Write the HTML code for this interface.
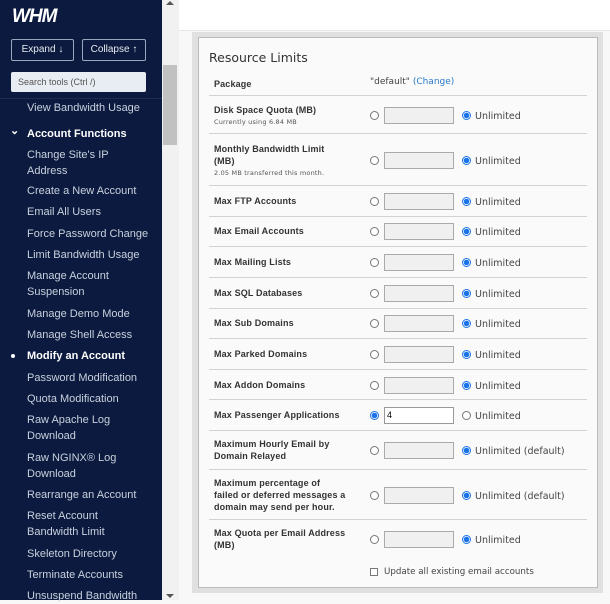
<!DOCTYPE html>
<html><head><meta charset="utf-8"><style>
*{margin:0;padding:0;box-sizing:border-box}
body{width:610px;height:600px;overflow:hidden;background:#f8f8f8;font-family:"Liberation Sans",sans-serif;position:relative}
#sb{position:absolute;left:0;top:0;width:162px;height:600px;background:#0b1a3e;color:#c9d1de;font-size:11px}
#sb .i{position:absolute;left:27px;line-height:16px}
#scroll{position:absolute;left:162px;top:0;width:17px;height:600px;background:#f1f1f1}
#thumb{position:absolute;left:163px;top:65px;width:14px;height:80px;background:#c1c1c1}
#top{position:absolute;left:179px;top:0;width:431px;height:31px;background:#fff;border-bottom:1px solid #e6e6e6}
#band{position:absolute;left:192px;top:32px;width:411px;height:561px;background:#e0e0e0}
#panel{position:absolute;left:198px;top:37px;width:400px;height:551px;background:#fafafa;border:1px solid #bbb}
.m{position:absolute;font-family:"DejaVu Sans","Liberation Sans",sans-serif}
.lbl{position:absolute;left:214px;font-size:9px;font-weight:bold;color:#333;line-height:12px;letter-spacing:.15px}
.sub{position:absolute;left:214px;font-size:6.5px;color:#555;font-family:"DejaVu Sans",sans-serif;letter-spacing:.2px}
.hr{position:absolute;left:209px;width:378px;height:1px;background:#d2d2d2}
.r{position:absolute;width:9px;height:9px;border-radius:50%;border:1px solid #777;background:#fff}
.r.on{border:1px solid #1a73e8;background:radial-gradient(circle,#1a73e8 0 2.5px,#fff 3px)}
.in{position:absolute;left:384px;width:70px;height:17px;border:1px solid #aaa;background:#f0f0f0}
.t{position:absolute;font-size:9.5px;color:#444;font-family:"DejaVu Sans",sans-serif;margin-top:2px}
</style></head><body>
<div id="sb">
<div style="position:absolute;left:12px;top:6px;font-size:19px;font-weight:900;font-style:italic;color:#fff;letter-spacing:-1px">WHM</div>
<div style="position:absolute;left:11px;top:39px;width:63px;height:22px;border:1px solid #9aa6bb;border-radius:2px;color:#e6eaf0;font-size:10px;line-height:20px;text-align:center">Expand ↓</div>
<div style="position:absolute;left:82px;top:39px;width:64px;height:22px;border:1px solid #9aa6bb;border-radius:2px;color:#e6eaf0;font-size:10px;line-height:20px;text-align:center">Collapse ↑</div>
<div style="position:absolute;left:11px;top:72px;width:135px;height:20px;background:#e8ecf3;border-radius:2px;color:#555;font-size:9px;line-height:20px;padding-left:7px">Search tools (Ctrl /)</div>
<div style="position:absolute;left:0;top:98px;width:162px;height:1px;background:#1d2c50"></div>
<div class="i" style="top:100px">View Bandwidth Usage</div>
<div class="i" style="top:126px;color:#fff;font-weight:bold">Account Functions</div>
<div style="position:absolute;left:10px;top:124px;color:#fff;font-size:11px;font-weight:bold">⌄</div>
<div class="i" style="top:147px">Change Site's IP<br>Address</div>
<div class="i" style="top:183px">Create a New Account</div>
<div class="i" style="top:204px">Email All Users</div>
<div class="i" style="top:226px">Force Password Change</div>
<div class="i" style="top:247px">Limit Bandwidth Usage</div>
<div class="i" style="top:268px">Manage Account<br>Suspension</div>
<div class="i" style="top:306px">Manage Demo Mode</div>
<div class="i" style="top:327px">Manage Shell Access</div>
<div style="position:absolute;left:11px;top:354px;width:4px;height:4px;border-radius:50%;background:#fff"></div>
<div class="i" style="top:348px;color:#fff;font-weight:bold">Modify an Account</div>
<div class="i" style="top:370px">Password Modification</div>
<div class="i" style="top:391px">Quota Modification</div>
<div class="i" style="top:412px">Raw Apache Log<br>Download</div>
<div class="i" style="top:450px">Raw NGINX® Log<br>Download</div>
<div class="i" style="top:487px">Rearrange an Account</div>
<div class="i" style="top:508px">Reset Account<br>Bandwidth Limit</div>
<div class="i" style="top:546px">Skeleton Directory</div>
<div class="i" style="top:567px">Terminate Accounts</div>
<div class="i" style="top:588px">Unsuspend Bandwidth</div>
</div>
<div id="scroll"></div><div id="thumb"></div>
<div style="position:absolute;left:166px;top:1px;width:0;height:0;border-left:4px solid transparent;border-right:4px solid transparent;border-bottom:4px solid #555"></div>
<div style="position:absolute;left:166px;top:594px;width:0;height:0;border-left:4px solid transparent;border-right:4px solid transparent;border-top:4px solid #555"></div>
<div id="top"></div>
<div id="band"></div>
<div id="panel"></div>
<div class="m" style="left:209px;top:50px;font-size:12.5px;color:#333">Resource Limits</div>
<div class="lbl" style="top:78px">Package</div>
<div class="t" style="left:370px;top:77px;font-size:9px;margin-top:0">"default" <span style="color:#2a7ac9">(Change)</span></div>
<div class="hr" style="top:95px"></div>

<div class="lbl" style="top:104px">Disk Space Quota (MB)</div><div class="sub" style="top:118px">Currently using 6.84 MB</div>
<div class="r" style="left:370px;top:111px"></div><div class="in" style="top:107px"></div><div class="r on" style="left:462px;top:111px"></div><div class="t" style="left:475px;top:109px">Unlimited</div>
<div class="hr" style="top:133px"></div>

<div class="lbl" style="top:143px">Monthly Bandwidth Limit<br>(MB)</div><div class="sub" style="top:169px">2.05 MB transferred this month.</div>
<div class="r" style="left:370px;top:156px"></div><div class="in" style="top:152px"></div><div class="r on" style="left:462px;top:156px"></div><div class="t" style="left:475px;top:154px">Unlimited</div>
<div class="hr" style="top:185px"></div>

<div id="rows"></div>
<script>
var rows=[["Max FTP Accounts",201,216],["Max Email Accounts",231,246],["Max Mailing Lists",262,277],["Max SQL Databases",293,308],["Max Sub Domains",323,338],["Max Parked Domains",354,369],["Max Addon Domains",385,399]];
var h="";
rows.forEach(function(r){var c=r[1];
h+='<div class="lbl" style="top:'+(c-6)+'px">'+r[0]+'</div><div class="r" style="left:370px;top:'+(c-4)+'px"></div><div class="in" style="top:'+(c-8)+'px"></div><div class="r on" style="left:462px;top:'+(c-4)+'px"></div><div class="t" style="left:475px;top:'+(c-6)+'px">Unlimited</div><div class="hr" style="top:'+r[2]+'px"></div>';});
document.getElementById("rows").innerHTML=h;
</script>

<div class="lbl" style="top:409px">Max Passenger Applications</div>
<div class="r on" style="left:370px;top:411px"></div><div class="in" style="top:407px;background:#fff;border-color:#999;font-size:9px;padding-left:2px;line-height:15px">4</div><div class="r" style="left:462px;top:411px"></div><div class="t" style="left:475px;top:409px">Unlimited</div>
<div class="hr" style="top:430px"></div>

<div class="lbl" style="top:438px">Maximum Hourly Email by<br>Domain Relayed</div>
<div class="r" style="left:370px;top:446px"></div><div class="in" style="top:442px"></div><div class="r on" style="left:462px;top:446px"></div><div class="t" style="left:475px;top:444px">Unlimited (default)</div>
<div class="hr" style="top:469px"></div>

<div class="lbl" style="top:477px">Maximum percentage of<br>failed or deferred messages a<br>domain may send per hour.</div>
<div class="r" style="left:370px;top:491px"></div><div class="in" style="top:487px"></div><div class="r on" style="left:462px;top:491px"></div><div class="t" style="left:475px;top:489px">Unlimited (default)</div>
<div class="hr" style="top:519px"></div>

<div class="lbl" style="top:527px">Max Quota per Email Address<br>(MB)</div>
<div class="r" style="left:370px;top:535px"></div><div class="in" style="top:531px"></div><div class="r on" style="left:462px;top:535px"></div><div class="t" style="left:475px;top:533px">Unlimited</div>

<div style="position:absolute;left:370px;top:568px;width:8px;height:8px;border:1px solid #777;background:#fff"></div>
<div class="t" style="left:384px;top:565px;font-size:8.7px">Update all existing email accounts</div>
</body></html>
